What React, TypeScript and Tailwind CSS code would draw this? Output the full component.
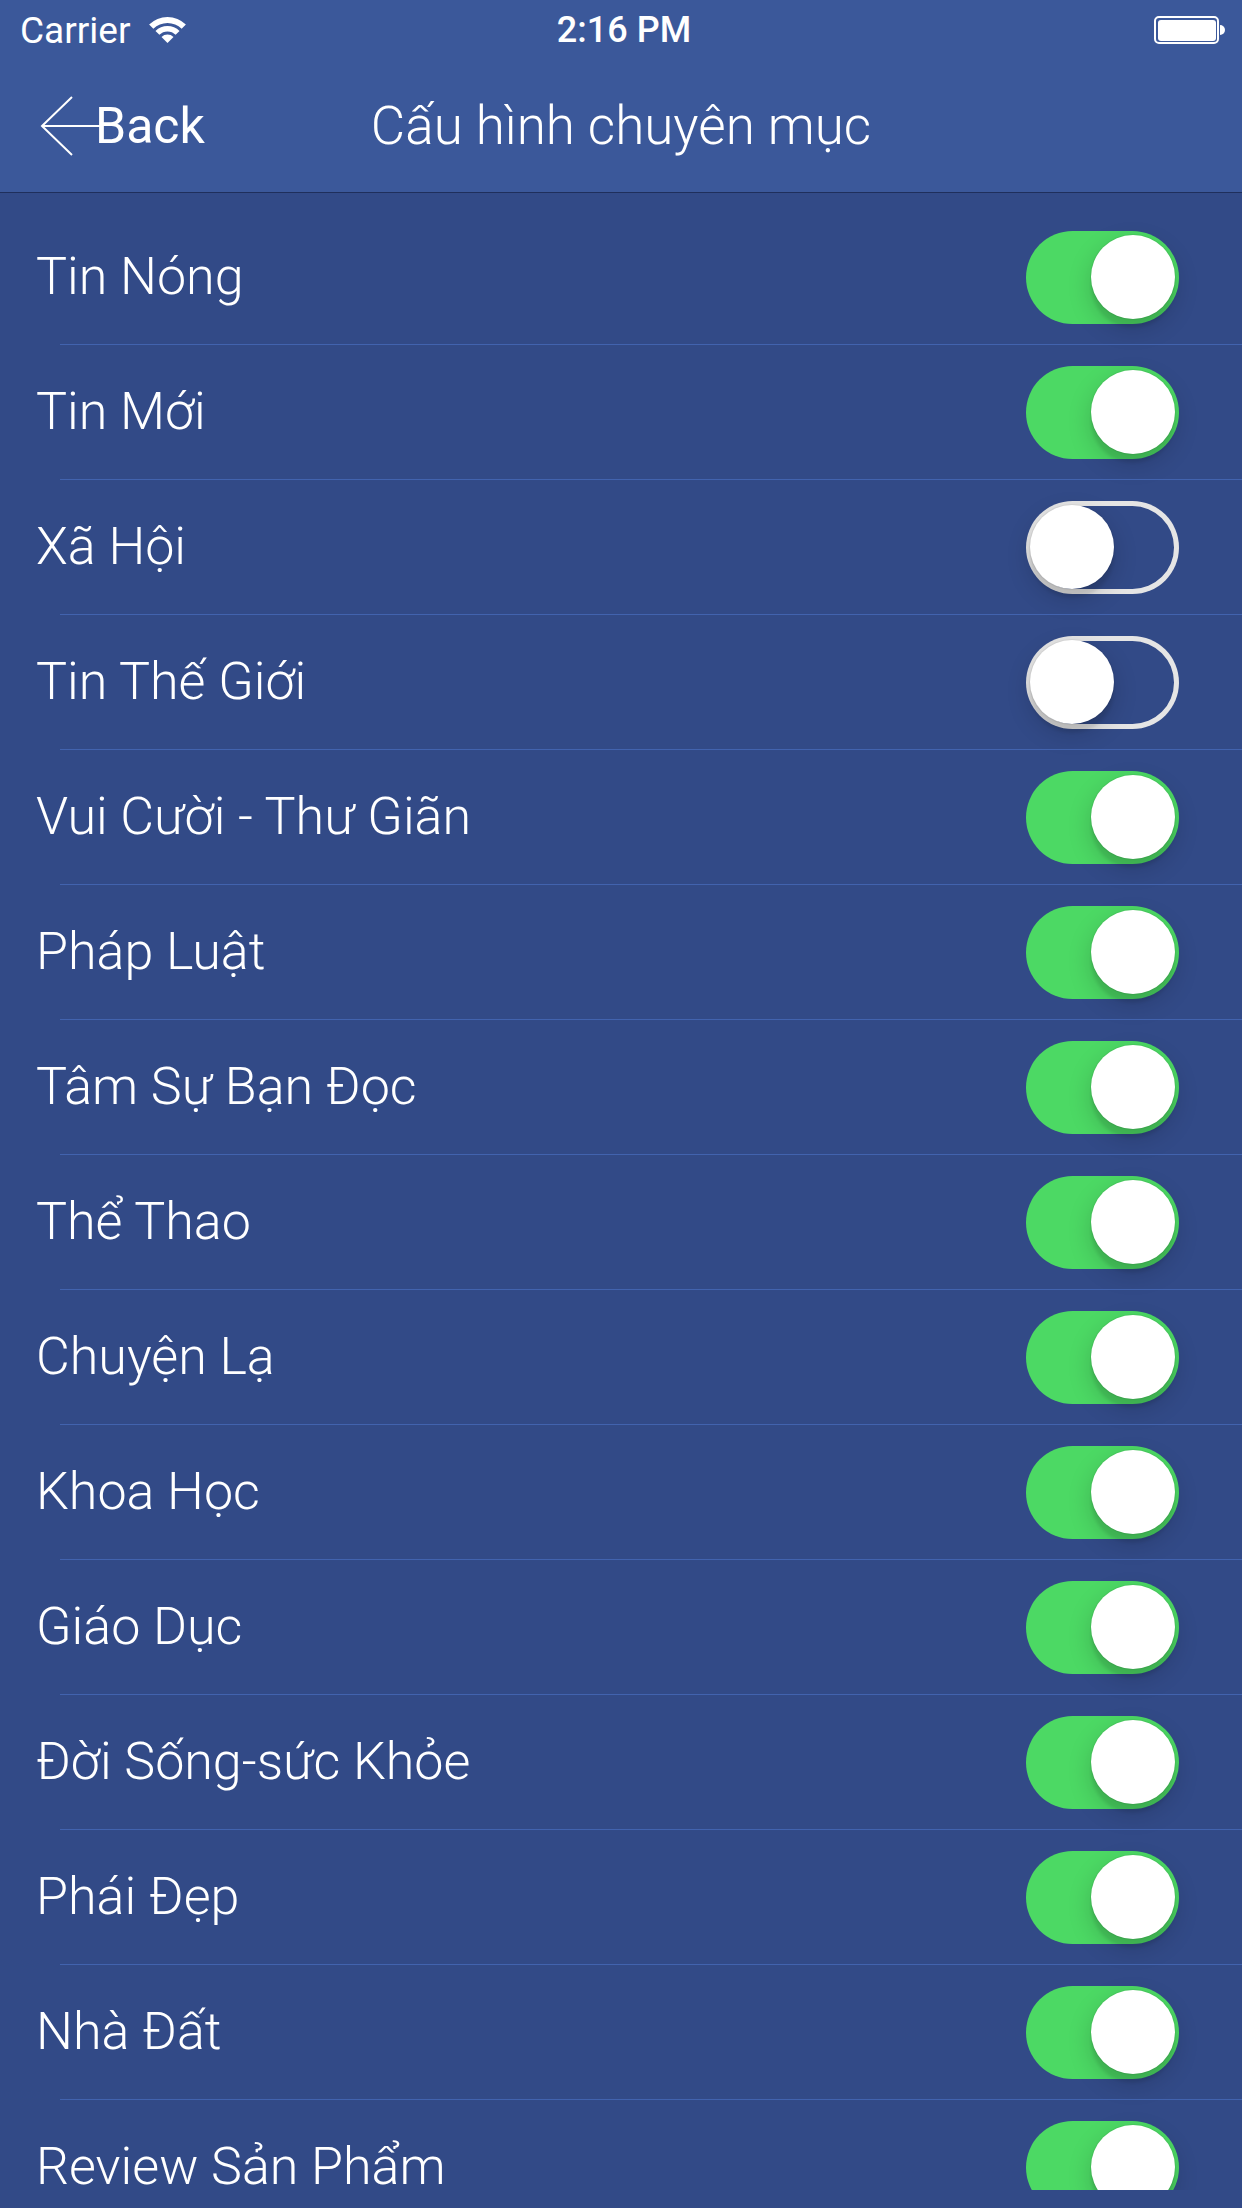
import React from "react";

const items: { label: string; on: boolean }[] = [
  { label: "Tin Nóng", on: true },
  { label: "Tin Mới", on: true },
  { label: "Xã Hội", on: false },
  { label: "Tin Thế Giới", on: false },
  { label: "Vui Cười - Thư Giãn", on: true },
  { label: "Pháp Luật", on: true },
  { label: "Tâm Sự Bạn Đọc", on: true },
  { label: "Thể Thao", on: true },
  { label: "Chuyện Lạ", on: true },
  { label: "Khoa Học", on: true },
  { label: "Giáo Dục", on: true },
  { label: "Đời Sống-sức Khỏe", on: true },
  { label: "Phái Đẹp", on: true },
  { label: "Nhà Đất", on: true },
  { label: "Review Sản Phẩm", on: true },
];

function Wifi() {
  return (
    <svg width="37" height="26" viewBox="0 0 37 26" fill="white">
      <path d="M0.12 7.62 A26 26 0 0 1 36.88 7.62 L32.64 11.86 A20 20 0 0 0 4.36 11.86 Z" />
      <path d="M6.48 13.98 A17 17 0 0 1 30.52 13.98 L26.63 17.87 A11.5 11.5 0 0 0 10.37 17.87 Z" />
      <path d="M18.5 26 L12.49 19.99 A8.5 8.5 0 0 1 24.51 19.99 Z" />
    </svg>
  );
}

function Battery() {
  return (
    <div className="flex items-center">
      <div className="h-[28px] w-[65px] rounded-[5px] border-2 border-white p-[1.5px]">
        <div className="h-full w-full rounded-[3px] bg-white" />
      </div>
      <div className="ml-[1px] h-[10px] w-[5px] rounded-r-[5px] bg-white" />
    </div>
  );
}

function BackArrow() {
  return (
    <svg width="62" height="62" viewBox="0 0 62 62" fill="none" stroke="white" strokeWidth="2">
      <path d="M32 2 L2 31 L32 60" />
      <path d="M2 31 L60 31" />
    </svg>
  );
}

const knobShadow =
  "shadow-[0_9px_24px_rgba(0,0,0,0.18),0_9px_3px_rgba(0,0,0,0.08),0_0_0_1px_rgba(0,0,0,0.05)]";

function Toggle({ on }: { on: boolean }) {
  if (on) {
    return (
      <div className="flex h-[93px] w-[153px] shrink-0 items-center justify-end rounded-full bg-[#4cd964] pr-[4px]">
        <div className={`h-[84px] w-[84px] rounded-full bg-white ${knobShadow}`} />
      </div>
    );
  }
  return (
    <div className="flex h-[93px] w-[153px] shrink-0 items-center justify-start rounded-full pl-[4px] shadow-[inset_0_0_0_5px_#e5e5e5]">
      <div className={`h-[84px] w-[84px] rounded-full bg-white ${knobShadow}`} />
    </div>
  );
}

export default function App() {
  return (
    <div
      className="flex h-[2208px] w-[1242px] flex-col overflow-hidden bg-[#324a87] text-white"
      style={{ fontFamily: "Roboto, 'Liberation Sans', 'Noto Sans', sans-serif" }}
    >
      <div className="flex h-[192px] shrink-0 flex-col bg-[#3b589a]">
        <div className="grid h-[60px] grid-cols-3 items-center">
          <div className="flex items-center gap-[19px] pl-[20px]">
            <span className="text-[37px] leading-none">Carrier</span>
            <Wifi />
          </div>
          <div className="flex justify-center pl-[6px]">
            <span className="text-[36px] font-medium leading-none">2:16 PM</span>
          </div>
          <div className="flex justify-end pr-[17px]">
            <Battery />
          </div>
        </div>
        <div className="grid h-[132px] grid-cols-[1fr_auto_1fr] items-center">
          <div className="flex items-center pl-[40px]">
            <BackArrow />
            <span className="-ml-[7px] text-[50px] leading-none">Back</span>
          </div>
          <div className="text-[53px] font-light leading-none">Cấu hình chuyên mục</div>
          <div />
        </div>
      </div>
      <div className="h-px shrink-0 bg-[#1f2f5c]" />
      <div className="flex h-[1997px] shrink-0 flex-col overflow-hidden pt-[17px]">
        {items.map((it) => (
          <div key={it.label} className="flex shrink-0 flex-col">
            <div className="flex h-[134px] items-center justify-between pl-[36px] pr-[63px]">
              <span className="text-[52px] font-light leading-none">{it.label}</span>
              <Toggle on={it.on} />
            </div>
            <div className="ml-[60px] h-px bg-[#4263ae]" />
          </div>
        ))}
      </div>
    </div>
  );
}
